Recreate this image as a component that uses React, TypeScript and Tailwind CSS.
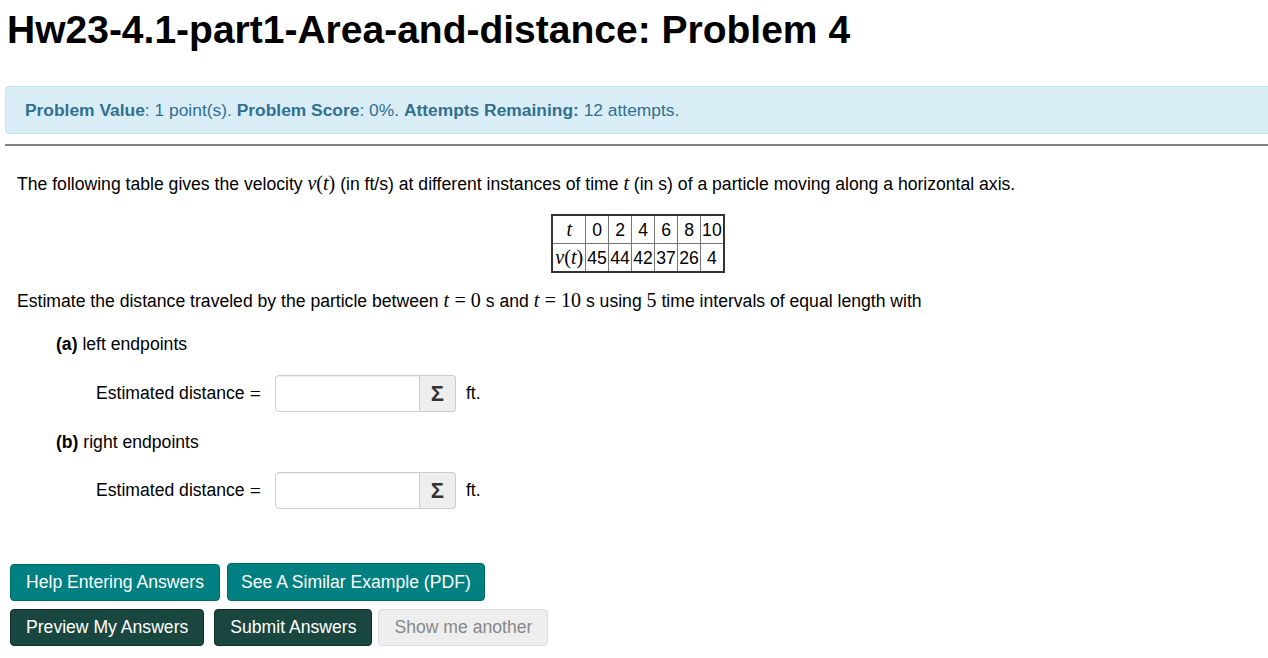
import React from "react";

const serif = { fontFamily: '"Liberation Serif", "DejaVu Serif", serif' };

const M = ({ children }: { children: React.ReactNode }) => (
  <span className="italic" style={serif}>{children}</span>
);
const R = ({ children }: { children: React.ReactNode }) => (
  <span className="not-italic" style={serif}>{children}</span>
);

const Vt = () => (
  <span className="text-[20px]">
    <M>v</M>
    <R>(</R>
    <M>t</M>
    <R>)</R>
  </span>
);

function AnswerRow() {
  return (
    <div className="flex items-center pl-[96px]">
      <span>Estimated distance</span>
      <span className="ml-[5px] text-[20px]" style={serif}>=</span>
      <div className="ml-[14px] flex h-[37px] items-stretch">
        <div className="w-[145px] rounded-l-[4px] border border-[#cccccc] bg-white shadow-[inset_0_1px_1px_rgba(0,0,0,0.075)]" />
        <div className="flex w-[36px] items-center justify-center rounded-r-[4px] border border-l-0 border-[#cccccc] bg-[#eeeeee] text-[22px] font-bold text-[#333]">
          Σ
        </div>
      </div>
      <span className="ml-[10px]">ft.</span>
    </div>
  );
}

export default function App() {
  return (
    <div
      className="min-h-[658px] w-[1268px] overflow-hidden bg-white text-[17.6px] text-[#000]"
      style={{ fontFamily: '"Liberation Sans", Arial, sans-serif' }}
    >
      <h1 className="pl-[7px] pt-[6px] text-[39px] font-bold leading-[48px] text-black">
        Hw23-4.1-part1-Area-and-distance: Problem 4
      </h1>
      <div className="ml-[5px] mt-[32px] -mr-[10px] rounded-[4px] border border-[#bce8f1] bg-[#d9edf7] px-[19px] py-[12px] text-[17.4px] text-[#31708f] leading-[22px]">
        <b>Problem Value</b>: 1 point(s). <b>Problem Score</b>: 0%. <b>Attempts Remaining:</b> 12 attempts.
      </div>
      <div className="ml-[5px] mt-[10px] h-[2px] bg-[#808080]" />
      <div className="px-[17px] pt-[25px]">
        <p className="leading-[24px]">
          The following table gives the velocity <Vt /> (in ft/s) at different instances of time{" "}
          <span className="text-[20px]"><M>t</M></span> (in s) of a particle moving along a horizontal axis.
        </p>
        <div className="mt-[18px] flex justify-center pl-[8px]">
          <table className="border-collapse border-2 border-[#333] text-center leading-[26px]">
            <tbody>
              <tr>
                <td className="border border-[#777] px-[4px]"><span className="text-[20px]"><M>t</M></span></td>
                {["0", "2", "4", "6", "8", "10"].map((v) => (
                  <td key={v} className="border border-[#777] px-[1px] min-w-[23px]">{v}</td>
                ))}
              </tr>
              <tr>
                <td className="border border-[#777] px-[2px]"><Vt /></td>
                {["45", "44", "42", "37", "26", "4"].map((v) => (
                  <td key={v} className="border border-[#777] px-[1px]">{v}</td>
                ))}
              </tr>
            </tbody>
          </table>
        </div>
        <p className="mt-[15px] leading-[24px]">
          Estimate the distance traveled by the particle between{" "}
          <span className="text-[20px]"><M>t</M> <R>= 0</R></span> s and{" "}
          <span className="text-[20px]"><M>t</M> <R>= 10</R></span> s using{" "}
          <span className="text-[20px]"><R>5</R></span> time intervals of equal length with
        </p>
      </div>
      <div className="pl-[56px] pt-[19px] leading-[24px]">
        <b>(a)</b> left endpoints
      </div>
      <div className="mt-[19px]"><AnswerRow /></div>
      <div className="pl-[56px] pt-[18px] leading-[24px]">
        <b>(b)</b> right endpoints
      </div>
      <div className="mt-[18px]"><AnswerRow /></div>
      <div className="pl-[10px] pt-[55px] text-[17.6px]">
        <div className="flex gap-[7px]">
          <div className="flex h-[37px] items-center rounded-[4px] border border-[#006b6b] bg-[#008080] px-[15px] text-white">
            Help Entering Answers
          </div>
          <div className="flex h-[38px] -mt-[1px] items-center rounded-[4px] border border-[#006b6b] bg-[#008080] px-[13px] text-white">
            See A Similar Example (PDF)
          </div>
        </div>
        <div className="mt-[8px] flex">
          <div className="flex h-[37px] items-center rounded-[4px] border border-[#0f2e28] bg-[#1a4640] px-[15px] text-white">
            Preview My Answers
          </div>
          <div className="ml-[10px] flex h-[37px] items-center rounded-[4px] border border-[#0f2e28] bg-[#1a4640] px-[15px] text-white">
            Submit Answers
          </div>
          <div className="ml-[6px] flex h-[37px] items-center rounded-[4px] border border-[#dddddd] bg-[#eeeeee] px-[15px] text-[#888888]">
            Show me another
          </div>
        </div>
      </div>
    </div>
  );
}
